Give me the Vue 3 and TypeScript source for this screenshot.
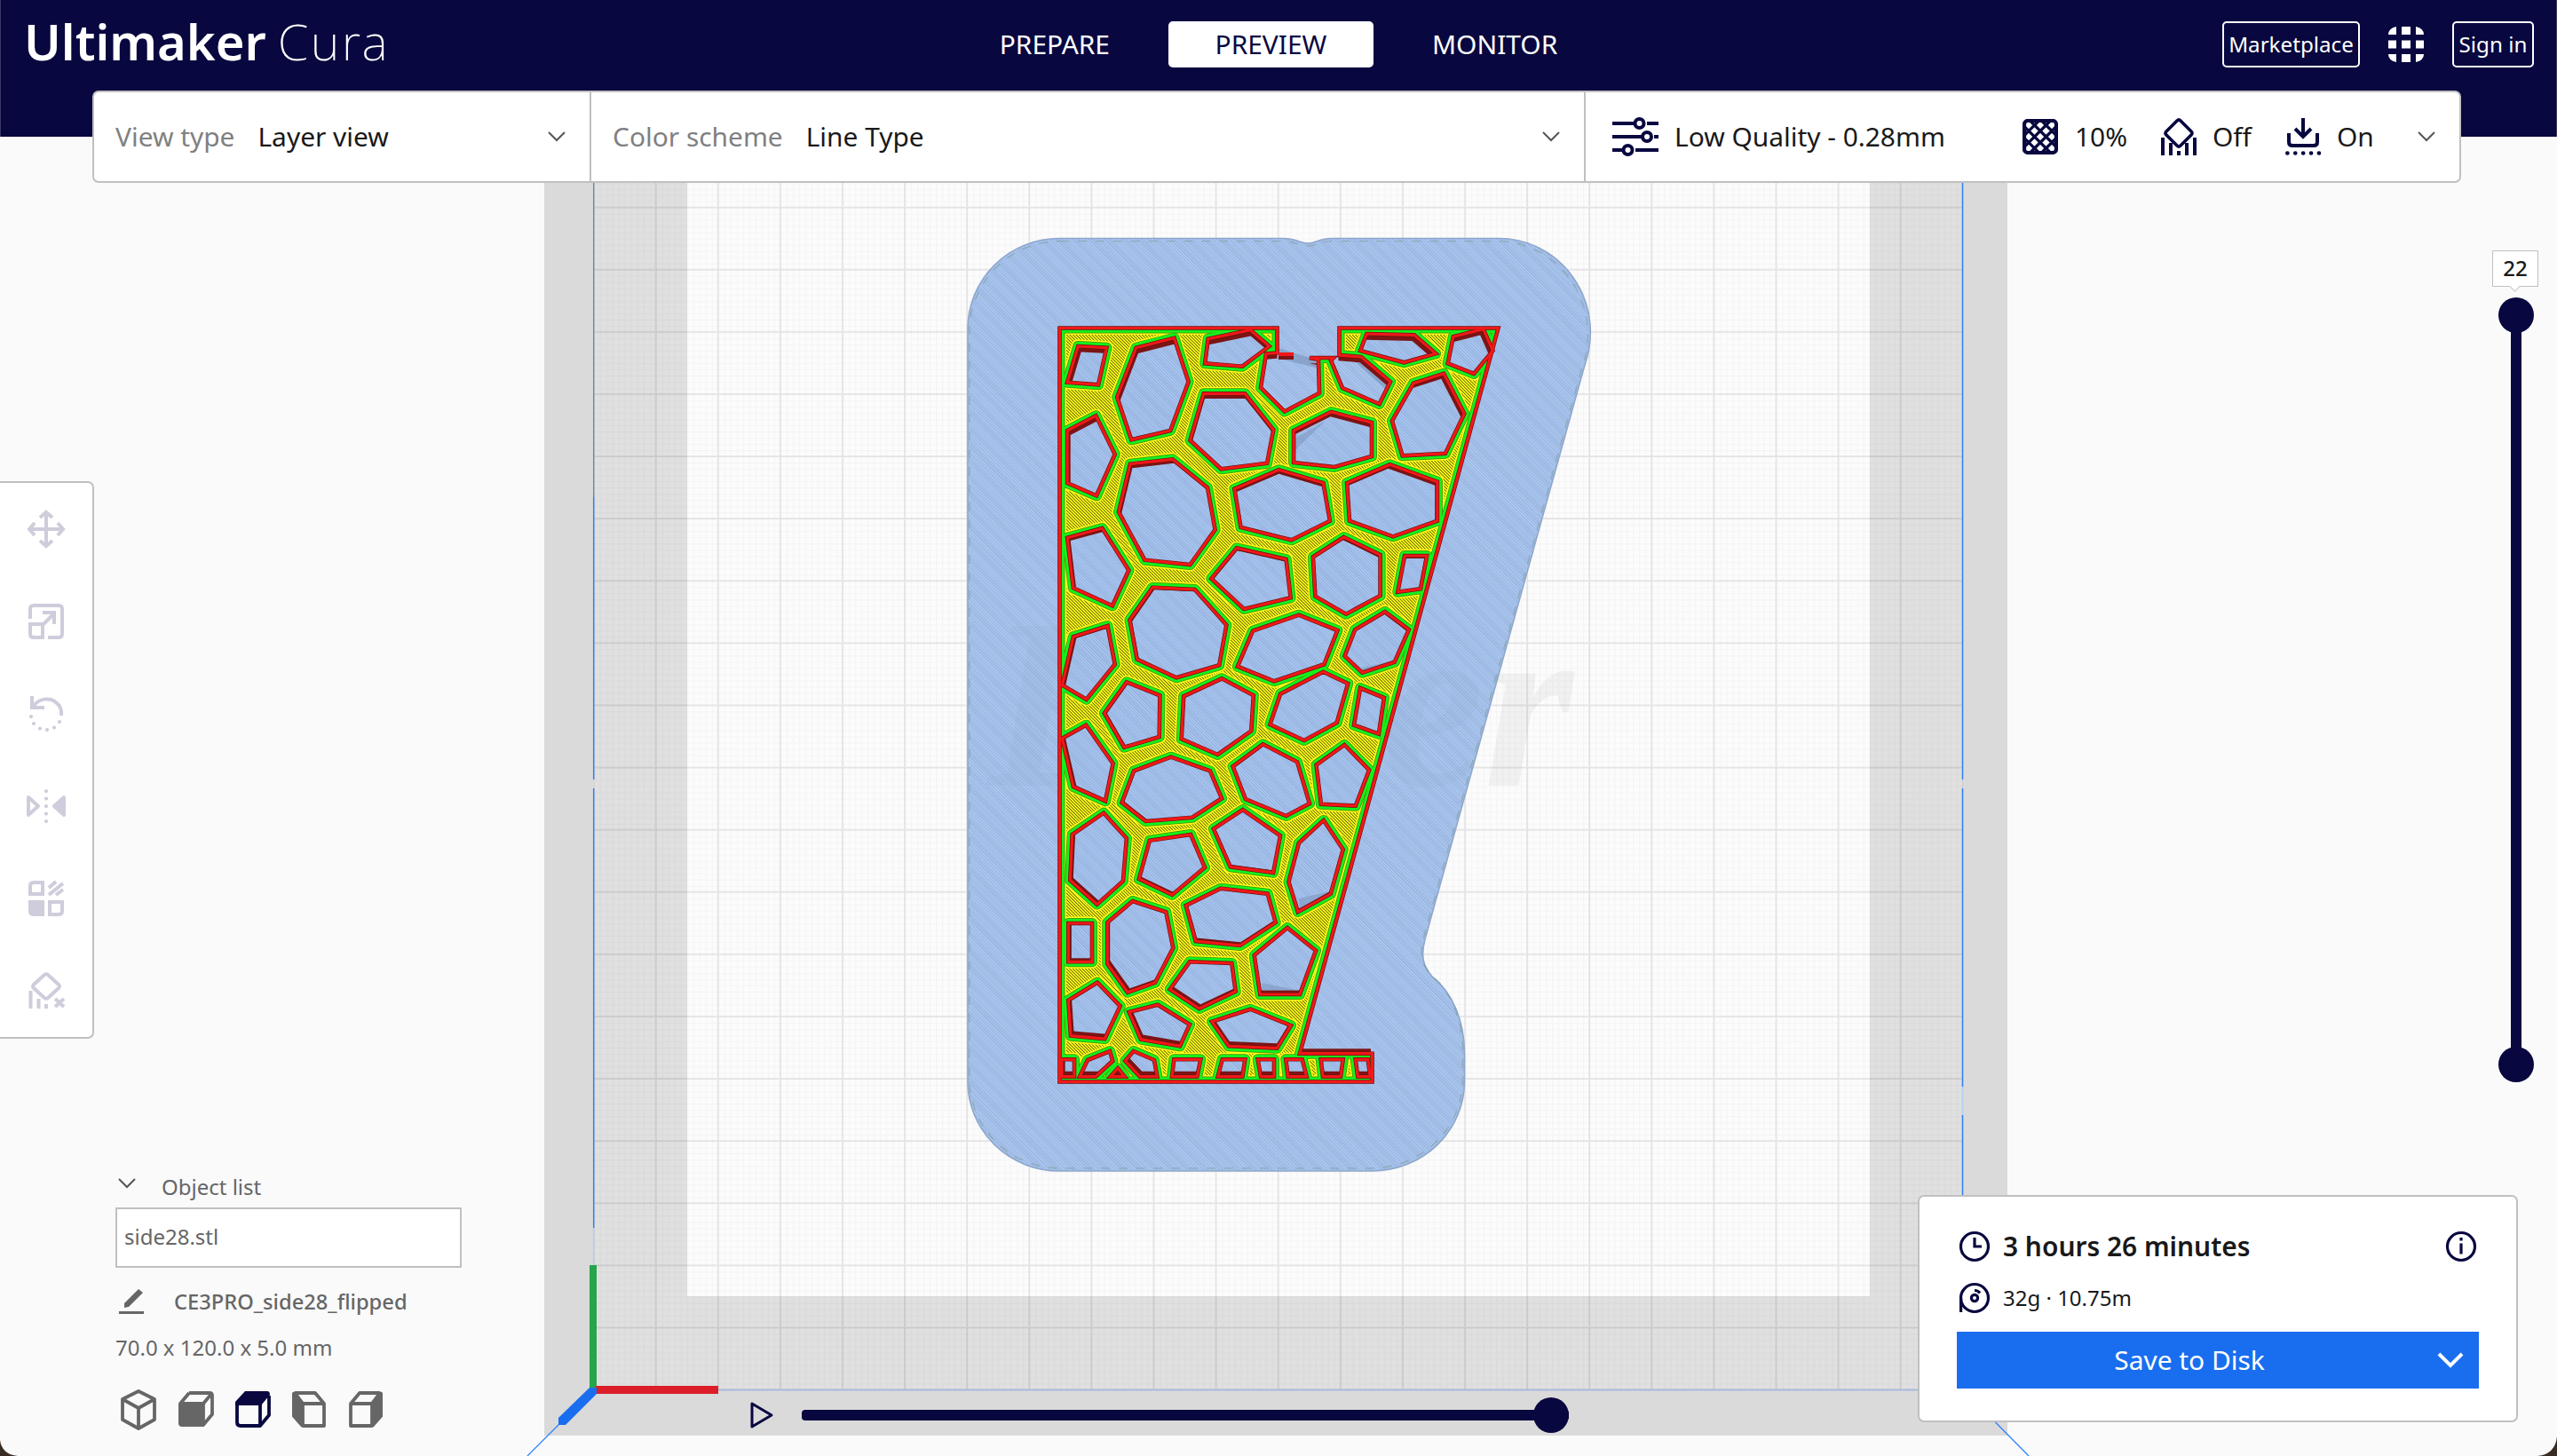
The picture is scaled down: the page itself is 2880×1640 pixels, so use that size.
<script setup lang="ts">
type Pt = [number, number]

interface Patch {
  ox: number
  oy: number
  sx: number
  sy: number
  shapes: string[]
}

// Hole outlines, grouped by the tile of the plate they were traced on.
const patches: Patch[] = [
  {
    ox: 1160, oy: 340, sx: 2.8, sy: 3,
    shapes: [
      '152,150 242,155 216,280 118,272',
      '335,155 455,122 500,270 443,435 320,466 275,322',
      '562,125 695,95 755,150 670,218 552,208',
      '1062,108 1212,112 1280,175 1180,205 1042,165',
      '1335,118 1430,92 1460,165 1400,243 1318,208',
      '548,310 678,310 768,432 748,545 603,565 505,468',
      '832,435 950,372 1078,408 1078,522 960,558 832,543',
      '1210,275 1305,242 1370,378 1310,512 1175,520 1142,402',
      '118,435 208,385 268,515 210,655 118,612',
      '316,548 450,532 560,628 584,770 505,888 362,872 280,710',
      '645,632 785,568 925,612 946,740 825,805 665,762',
      '1000,612 1135,550 1285,608 1285,740 1145,793 1008,740',
      '118,797 228,765 312,907 260,1027 137,967',
      '652,832 808,870 822,1000 675,1038 572,935',
      '990,795 1105,855 1105,993 997,1055 900,995 893,862',
      '1182,858 1252,858 1232,970 1160,980',
    ],
  },
  {
    ox: 1160, oy: 640, sx: 2.8, sy: 3,
    shapes: [
      '387,65 520,72 620,192 597,328 462,370 338,308 315,175',
      '848,158 970,210 928,325 770,382 655,332 703,212',
      '1120,147 1195,208 1150,317 1048,353 993,297 1025,208',
      '137,232 245,195 268,325 178,443 102,395',
      '305,385 410,430 408,570 297,605 235,490',
      '605,373 705,430 698,550 592,630 478,577 485,433',
      '925,350 1003,390 968,522 865,582 757,528 790,425',
      '1042,405 1117,438 1100,560 1022,530',
      '177,530 262,660 238,787 137,738 102,575',
      '445,638 568,685 605,778 512,842 365,855 290,792 328,685',
      '735,595 843,655 882,795 808,837 680,780 640,670',
      '992,597 1070,682 1027,803 918,797 903,665',
    ],
  },
  {
    ox: 1060, oy: 780, sx: 2.01026, sy: 2.8,
    shapes: [
      '368,380 420,460 412,595 353,668 292,592 297,448',
      '472,467 565,448 597,552 523,638 448,588',
      '683,370 768,452 752,568 655,550 617,430',
      '866,403 910,495 882,635 808,692 787,597 810,475',
    ],
  },
  {
    ox: 1160, oy: 940, sx: 3, sy: 3,
    shapes: [
      '645,182 803,200 830,297 710,375 560,360 527,240',
      '870,315 966,392 912,540 778,540 758,408',
      '130,300 210,300 210,430 130,430',
      '347,225 460,262 484,383 423,500 330,533 262,437 262,297',
      '540,430 682,435 695,530 572,588 473,523',
      '228,500 305,580 253,690 138,680 130,560',
      '432,575 540,642 507,715 375,692 335,600',
      '745,590 882,645 835,722 672,715 615,632',
      '108,760 150,760 150,818 108,818',
      '195,762 270,732 280,765 222,818 168,818',
      '350,732 420,762 430,818 372,818 322,765',
      '297,790 320,818 272,818',
      '487,760 577,760 565,818 480,818',
      '650,760 727,760 718,818 635,818',
      '770,760 825,760 825,818 780,818',
      '865,760 920,760 935,818 872,818',
      '983,760 1058,760 1050,818 990,818',
      '1100,760 1142,760 1150,818 1108,818',
    ],
  },
]

const holes: string[] = patches.flatMap((p) =>
  p.shapes.map((s) =>
    s.split(' ')
      .map((pair) => pair.split(',').map(Number) as Pt)
      .map(([u, v]) => `${(p.ox + u / p.sx).toFixed(1)},${(p.oy + v / p.sy).toFixed(1)}`)
      .join(' '),
  ),
)

const outline =
  'M1193.5 369.5H1438.5V397.5L1426 398.5L1420 436.7L1446.8 463.5L1486 442.7L1485 405L1475 403H1502L1499 406L1512 437L1553.5 455L1566 430L1533 402L1508.5 400V369.5H1687.5L1464 1186.7H1545.5V1218.5H1193.5Z'

const raft =
  'M1193 268.5H1445C1460 268.5 1464 274 1473 274S1486 268.5 1500 268.5H1685A103 106 0 0 1 1785 411L1605 1058C1600 1078 1603 1088 1613 1100C1636 1118 1649.5 1150 1649.5 1187V1219A104 101 0 0 1 1546 1319H1193A103 101 0 0 1 1090 1218V370A103 102 0 0 1 1193 268.5Z'

// The lowest layer is farther from the camera, so it shrinks towards the view centre.
const depth = 'translate(1440 820) scale(0.985) translate(-1440 -820)'

const cubes = [
  { name: '3d', color: '#666', lines: 'M22 3 40 12V35L22 45 4 35V12ZM4 12 22 22 40 12M22 22V45', fill: '' },
  { name: 'front', color: '#666', lines: 'M15 5H38Q41 5 41 8V29L31 41M15 5 5 17H31L41 5M31 17V42', fill: 'M3 17H32V43H7Q3 43 3 39Z' },
  { name: 'top', color: '#08073f', lines: 'M5 17V38Q5 42 9 42H31L41 30V8M31 17V42', fill: 'M14 3H39Q42 3 42 7L32 19H3V15Z' },
  { name: 'left', color: '#666', lines: 'M6 5H29L39 17V42H15V17H39M6 5 15 17M15 42 5 31V7', fill: 'M3 5Q5 2 8 5L16 17V43H13L3 31Z' },
  { name: 'right', color: '#666', lines: 'M38 5H15L5 17V42H29V17H5M38 5 29 17M29 42 39 31V7', fill: 'M41 5Q39 2 36 5L28 17V43H31L41 31Z' },
]
</script>

<template>
  <div class="app">
    <svg class="viewport" viewBox="0 0 2880 1640" width="2880" height="1640">
      <defs>
        <pattern id="minor" x="668.5" y="1565.5" width="7.01" height="7.01" patternUnits="userSpaceOnUse">
          <path d="M0 .5H7.01M.5 0V7.01" stroke="#000" stroke-opacity=".028" stroke-width="1.3" fill="none" />
        </pattern>
        <pattern id="major" x="667.5" y="1564.5" width="70.1" height="70.1" patternUnits="userSpaceOnUse">
          <path d="M0 1H70.1M1 0V70.1" stroke="#000" stroke-opacity=".075" stroke-width="2" fill="none" />
        </pattern>
        <pattern id="brim" width="13" height="13" patternUnits="userSpaceOnUse" patternTransform="rotate(-45)">
          <rect width="13" height="13" fill="#accbf7" />
          <path d="M.6 0V13M3.200 0V13M5.800 0V13M8.400 0V13M11 0V13" stroke="#8ea9d2" stroke-width="1" />
          <rect width="5" height="13" fill="#7f9ac6" fill-opacity=".13" />
        </pattern>
        <pattern id="skin" width="2.5" height="8" patternUnits="userSpaceOnUse" patternTransform="rotate(-45)">
          <rect width="2.5" height="8" fill="#ffff1a" />
          <rect width=".75" height="8" fill="#454400" />
        </pattern>
        <clipPath id="body"><path :d="outline" /></clipPath>
        <clipPath id="raftclip"><path :d="raft" /></clipPath>
        <clipPath v-for="(h, i) in holes" :id="'h' + i" :key="i"><polygon :points="h" /></clipPath>
      </defs>

      <rect width="2880" height="1640" fill="#fafafa" />
      <rect x="613" y="150" width="1648" height="1467" fill="#dadada" />
      <rect x="669" y="150" width="1542" height="1416" fill="#e0e0e0" />
      <rect x="774" y="150" width="1332" height="1310" fill="#fcfcfc" />
      <rect x="669" y="150" width="1542" height="1416" fill="url(#minor)" />
      <rect x="669" y="150" width="1542" height="1416" fill="url(#major)" />

      <path d="M668.7 206V560" stroke="#5b83bd" stroke-width="1.3" />
      <path d="M668.7 560V878M668.7 888V1383M2210.5 206V878M2210.5 888V1224M2210.5 1256V1400" stroke="#2f80fa" stroke-width="1.5" />
      <path d="M668.7 1383V1425M2210.5 1224V1256" stroke="#b4cdf5" stroke-width="1.5" />
      <path d="M809 1565.5H2211" stroke="#a9b9dd" stroke-width="2" />
      <path d="M668 1566 594 1640M2211 1565 2285 1640" stroke="#2f80fa" stroke-width="1.3" />

      <text class="brand-mark" x="1112" y="885" textLength="660" lengthAdjust="spacingAndGlyphs">Ender</text>
      <path :d="raft" fill="url(#brim)" fill-opacity=".96" stroke="#8fa6cd" stroke-width="1.6" />
      <g clip-path="url(#raftclip)">
        <text class="brand-mark faint" x="1112" y="885" textLength="660" lengthAdjust="spacingAndGlyphs">Ender</text>
      </g>
      <path :d="raft" fill="none" stroke="#7f9d9a" stroke-opacity=".6" stroke-width="1.4" stroke-dasharray="10 10" transform="translate(1370 794) scale(.993 .994) translate(-1370 -794)" />

      <path d="M1440 392 1478 404 1490 416 1440 404Z" fill="#7f98bf" fill-opacity=".7" />
      <path d="M1520 402 1534 404 1566 434 1560 438Z" fill="#7f98bf" fill-opacity=".7" />
      <path :d="outline" :transform="depth" fill="#7c1415" />
      <path :d="outline" fill="url(#skin)" />
      <g clip-path="url(#body)">
        <path :d="outline" class="edge-skin" />
        <polygon v-for="(h, i) in holes" :key="'y' + i" :points="h" class="edge-skin" />
        <path :d="outline" class="edge-gap" />
        <polygon v-for="(h, i) in holes" :key="'d' + i" :points="h" class="edge-gap" />
        <path :d="outline" class="edge-inner" />
        <polygon v-for="(h, i) in holes" :key="'g' + i" :points="h" class="edge-inner" />
      </g>
      <g v-for="(h, i) in holes" :key="'w' + i">
        <polygon :points="h" fill="#7c1415" />
        <g :clip-path="'url(#h' + i + ')'">
          <g :transform="depth"><polygon :points="h" fill="url(#brim)" /></g>
        </g>
      </g>
      <path d="M1458 494 1493 474 1470 496 1458 508Z" fill="#7f98bf" fill-opacity=".6" />
      <path d="M1534 752 1568 745 1535 756Z" fill="#7f98bf" fill-opacity=".6" />
      <path d="M1463 1012 1498 1004 1464 1024Z" fill="#7f98bf" fill-opacity=".6" />
      <path d="M1421 1107 1460 1115H1421Z" fill="#7f98bf" fill-opacity=".6" />
      <path :d="outline" class="edge-shade" />
      <polygon v-for="(h, i) in holes" :key="'s' + i" :points="h" class="edge-shade" />
      <path :d="outline" class="edge-outer" />
      <polygon v-for="(h, i) in holes" :key="'r' + i" :points="h" class="edge-outer" />
      <rect x="1440" y="397" width="17" height="4" fill="#f21717" />
      <rect x="1440" y="401" width="17" height="4" fill="#7c1415" />

      <rect x="664" y="1425" width="8" height="140" fill="#25a54c" />
      <rect x="671" y="1561" width="138" height="9" fill="#db1e28" />
      <path d="M664 1563H672V1570L637 1605H629V1597Z" fill="#196ef0" />
      <path d="M0 1622Q2 1638 20 1640H0ZM2880 1618Q2878 1638 2858 1640H2880Z" fill="#3a2c22" />
    </svg>

    <header class="header">
      <div class="logo"><b>Ultimaker</b><span>Cura</span></div>
      <nav class="stages">
        <a>PREPARE</a>
        <a class="active">PREVIEW</a>
        <a>MONITOR</a>
      </nav>
      <div class="account">
        <span class="btn market">Marketplace</span>
        <svg class="apps" width="40" height="40" viewBox="0 0 40 40" fill="#fff">
          <path d="M9 0V9H0Q0 2 9 0ZM15 0H25V9H15ZM31 0Q40 2 40 9H31ZM0 15.500H9V24.500H0ZM15 15.500H25V24.500H15ZM31 15.500H40V24.500H31ZM0 31H9V40Q0 38 0 31ZM15 31H25V40H15ZM31 31H40Q40 38 31 40Z" />
        </svg>
        <span class="btn sign">Sign in</span>
      </div>
    </header>

    <section class="bar">
      <div class="cell view">
        <span class="label">View type</span><span>Layer view</span>
        <svg class="chev" width="20" height="12" viewBox="0 0 20 12"><path d="M1 1 10 10 19 1" /></svg>
      </div>
      <div class="cell scheme">
        <span class="label">Color scheme</span><span>Line Type</span>
        <svg class="chev" width="20" height="12" viewBox="0 0 20 12"><path d="M1 1 10 10 19 1" /></svg>
      </div>
      <div class="cell settings">
        <svg width="52" height="44" viewBox="0 0 52 44" fill="none" stroke="#08073f" stroke-width="4">
          <path d="M0 7H25M39 7H52M0 22H33M47 22H52M0 37H12M26 37H52" />
          <circle cx="30.500" cy="7" r="5" /><circle cx="39" cy="22" r="5" /><circle cx="17.500" cy="37" r="5" />
        </svg>
        <span class="profile">Low Quality - 0.28mm</span>
        <svg width="40" height="40" viewBox="0 0 40 40">
          <rect x="2" y="2" width="36" height="36" rx="4" fill="none" stroke="#08073f" stroke-width="4.200" />
          <path d="M3 30.500 30.500 3M9.500 37 37 9.500M9.500 3 37 30.500M3 9.500 30.500 37M3 17.500 17.500 3M22.500 3 37 17.500M3 22.500 17.500 37M22.500 37 37 22.500" fill="none" stroke="#08073f" stroke-width="3.200" />
        </svg>
        <span class="infill">10%</span>
        <svg width="40" height="42" viewBox="0 0 40 42" fill="none" stroke="#08073f" stroke-width="4">
          <path d="M18 3Q20 1 22 3L34 15Q36 17 34 19L22 31Q20 33 18 31L6 19Q4 17 6 15Z" stroke-width="3.600" />
          <path d="M2 22V42M38 22V42M11 28V42M29 28V42M20 37V42" />
        </svg>
        <span class="support">Off</span>
        <svg width="40" height="42" viewBox="0 0 40 42" fill="none" stroke="#08073f" stroke-width="4">
          <path d="M20 0V20M11 12 20 21 29 12M4 17V27Q4 31 8 31H32Q36 31 36 27V17" />
          <path d="M2.300 39.500H40" stroke-linecap="round" stroke-dasharray=".1 8.800" stroke-width="4.600" />
        </svg>
        <span>On</span>
        <svg class="chev" width="20" height="12" viewBox="0 0 20 12"><path d="M1 1 10 10 19 1" /></svg>
      </div>
    </section>

    <aside class="tools">
      <svg viewBox="0 0 44 44" class="ln"><path d="M22 4V40M4 22H40M15 9 22 3 29 9M15 35 22 41 29 35M9 15 3 22 9 29M35 15 41 22 35 29" /></svg>
      <svg viewBox="0 0 44 44" class="ln"><path d="M4 19V8Q4 4 8 4H36Q40 4 40 8V36Q40 40 36 40H24M4 25H18V40H8Q4 40 4 36ZM18 26 31 13M18 12H31V25" /></svg>
      <svg viewBox="0 0 44 44" class="ln"><path d="M6 2V15H20M7 14C14 4 27 3 34 10Q40 15 39 24" /><path class="dots" d="M5 25 5 25.100M8 33 8 33.100M15 38.500V38.600M23 40V40.100M31 37.500V37.600M37 31V31.100" /></svg>
      <svg viewBox="0 0 44 44" class="ln"><path d="M2 12V32L13 22Z" stroke-linejoin="round" /><path d="M42 12V32L31 22Z" fill="#cfccdb" stroke-linejoin="round" /><path class="dots" d="M22 5V5.100M22 13.500V13.600M22 22V22.100M22 30.500V30.600M22 39V39.100" /></svg>
      <svg viewBox="0 0 44 44" class="ln">
        <path d="M4 17V8Q4 4 8 4H18V17ZM26 26H40V36Q40 40 36 40H26Z" /><path d="M4 26H18V40H8Q4 40 4 36Z" fill="#cfccdb" />
        <path d="M25 10 33 3M25 18 41 5M33 18 41 12" />
      </svg>
      <svg viewBox="0 0 44 44" class="ln"><path d="M20 4Q22 2.500 24 4L36 15Q38 17 36 19L24 30Q22 31.500 20 30L8 19Q6 17 8 15Z" /><path d="M4.500 22V42M13.500 31V42M22 37V42M32 31 42 40M42 31 32 40" /></svg>
    </aside>

    <section class="objects">
      <div class="obj-head">
        <svg class="chev" width="20" height="12" viewBox="0 0 20 12"><path d="M1 1 10 10 19 1" /></svg>
        <span>Object list</span>
      </div>
      <div class="obj-item">side28.stl</div>
      <div class="obj-name">
        <svg width="28" height="28" viewBox="0 0 28 28" fill="#666"><path d="M0 25H28V28H0ZM6 21V16L22 0 27 4 11 20Z" /></svg>
        <span>CE3PRO_side28_flipped</span>
      </div>
      <div class="obj-size">70.0 x 120.0 x 5.0 mm</div>
      <div class="cubes">
        <svg v-for="c in cubes" :key="c.name" width="44" height="48" viewBox="0 0 44 48">
          <path :d="c.lines" fill="none" :stroke="c.color" stroke-width="3.800" stroke-linejoin="round" />
          <path v-if="c.fill" :d="c.fill" :fill="c.color" />
        </svg>
      </div>
    </section>

    <div class="path-slider">
      <svg width="28" height="32" viewBox="0 0 28 32"><path d="M2 3V29L24 16Z" fill="none" stroke="#08073f" stroke-width="3" stroke-linejoin="round" /></svg>
      <div class="track"><i></i></div>
    </div>

    <div class="layer-slider">
      <div class="layer-value">22</div>
      <div class="vtrack"><i></i><i></i></div>
    </div>

    <section class="output">
      <div class="row time">
        <svg width="36" height="36" viewBox="0 0 36 36" fill="none" stroke="#08073f" stroke-width="3.200"><circle cx="18" cy="18" r="15.500" /><path d="M18 8V18H26" /></svg>
        <b>3 hours 26 minutes</b>
        <svg class="info" width="36" height="36" viewBox="0 0 36 36" fill="none" stroke="#08073f" stroke-width="3.200"><circle cx="18" cy="18" r="15.500" /><path d="M18 14.500V26.500M18 8V11.500" /></svg>
      </div>
      <div class="row usage">
        <svg width="36" height="36" viewBox="0 0 36 36" fill="none" stroke="#08073f" stroke-width="3.200"><circle cx="18" cy="18" r="15.500" /><circle cx="18" cy="18" r="3.600" /><path d="M2.600 18V34M18 9.500Q22 9.500 24 12.500" /></svg>
        <span>32g · 10.75m</span>
      </div>
      <div class="save">
        <span>Save to Disk</span>
        <svg width="30" height="18" viewBox="0 0 30 18"><path d="M2 2 15 15 28 2" fill="none" stroke="#fff" stroke-width="4" /></svg>
      </div>
    </section>
  </div>
</template>

<style>
body { margin: 0; }
</style>

<style scoped>
.app {
  position: relative;
  width: 2880px;
  height: 1640px;
  overflow: hidden;
  background: #fafafa;
  color: #191919;
  font-family: "Noto Sans", "Open Sans", sans-serif;
  font-size: 29.900px;
  line-height: 40px;
  white-space: nowrap;
}
svg { display: block; flex: none; }
.viewport { position: absolute; left: 0; top: 0; }
.brand-mark {
  font: italic bold 275px "Liberation Serif", serif;
  fill: #000;
  fill-opacity: .045;
}
.faint { fill-opacity: .016; }
.edge-skin, .edge-gap, .edge-inner, .edge-shade, .edge-outer { fill: none; stroke-linejoin: round; }
.edge-skin { stroke: #fbfb18; stroke-width: 15; }
.edge-gap { stroke: #4f8a08; stroke-width: 12; }
.edge-inner { stroke: #14f01c; stroke-width: 10.500; }
.edge-shade { stroke: #6d0f0f; stroke-width: 4.600; stroke-linejoin: miter; }
.edge-outer { stroke: #f01818; stroke-width: 3.200; stroke-linejoin: miter; }

.header {
  position: relative;
  box-sizing: border-box;
  height: 154px;
  padding: 24px 25px 0 26px;
  display: grid;
  grid-template-columns: 1fr auto 1fr;
  align-items: start;
  background: #08073f;
  border-left: 1px solid #3a3968;
  border-right: 1px solid #3a3968;
  color: #fff;
}
.logo { display: flex; gap: 13px; font-size: 56px; line-height: 52px; margin-top: -4px; }
.logo b { font-weight: 600; }
.logo span { font-weight: 200; letter-spacing: 2.400px; }
.stages { display: flex; gap: 66px; line-height: 52px; margin-left: -1px; }
.stages .active { box-sizing: border-box; width: 231px; text-align: center; background: #fff; color: #08073f; border-radius: 5px; }
.account { display: flex; align-items: center; justify-content: flex-end; font-size: 24.200px; }
.btn { box-sizing: border-box; height: 52px; line-height: 48px; border: 2px solid #fff; border-radius: 5px; text-align: center; }
.market { width: 155px; }
.apps { margin: 0 32px; }
.sign { width: 92px; }

.bar {
  position: absolute;
  left: 104px;
  top: 102px;
  box-sizing: border-box;
  width: 2668px;
  height: 104px;
  display: flex;
  background: #fff;
  border: 2px solid #c0c0c0;
  border-radius: 7px;
}
.cell { display: flex; align-items: center; box-sizing: border-box; flex: none; }
.cell + .cell { border-left: 2px solid #c0c0c0; }
.label { color: #808080; margin-right: 26px; }
.chev { margin-left: auto; fill: none; stroke: #555; stroke-width: 2; }
.view { width: 558px; padding: 0 27px 0 24px; }
.scheme { width: 1120px; padding: 0 27px 0 24px; }
.cell.settings { flex: 1; padding: 0 27px 0 30px; }
.profile { margin-left: 18px; width: 392px; }
.infill { margin-left: 19px; width: 97px; }
.support { margin-left: 18px; width: 82px; }
.settings span:nth-of-type(4) { margin-left: 18px; }

.tools {
  position: absolute;
  left: -2px;
  top: 542px;
  box-sizing: border-box;
  width: 108px;
  height: 628px;
  padding: 30px 0 0 30px;
  display: flex;
  flex-direction: column;
  gap: 60px;
  background: #fff;
  border: 2px solid #c0c0c0;
  border-radius: 0 7px 7px 0;
}
.tools svg { width: 44px; height: 44px; overflow: visible; }
.ln path { fill: none; stroke: #cfccdb; stroke-width: 4; }
.ln path[fill] { fill: #cfccdb; }
.ln .dots { stroke-linecap: round; stroke-width: 4.200; }

.objects { position: absolute; left: 130px; top: 1318px; width: 390px; font-size: 24px; color: #666; }
.obj-head { display: flex; align-items: center; gap: 29px; padding-left: 3px; height: 38px; }
.obj-head .chev { margin: -8px 0 0; }
.obj-item { box-sizing: border-box; margin-top: 4px; height: 68px; padding-left: 8px; line-height: 62px; background: #fff; border: 2px solid #c0c0c0; }
.obj-name { display: flex; align-items: center; gap: 34px; height: 40px; margin-top: 18px; padding-left: 4px; font-weight: 500; font-size: 23.700px; }
.obj-size { margin-top: 12px; }
.cubes { display: flex; gap: 20px; margin: 26px 0 0 4px; }

.path-slider { position: absolute; left: 845px; top: 1574px; height: 40px; display: flex; align-items: center; gap: 30px; }
.track { width: 864px; height: 12px; border-radius: 4px; background: #08073f; display: flex; align-items: center; justify-content: flex-end; }
i { display: block; flex: none; width: 40px; height: 40px; border-radius: 50%; background: #08073f; }

.layer-slider { position: absolute; left: 2807px; top: 282px; width: 54px; display: flex; flex-direction: column; align-items: center; gap: 12px; }
.layer-value { position: relative; box-sizing: border-box; width: 52px; height: 41px; margin-right: 2px; line-height: 38px; text-align: center; font-size: 24px; font-weight: 500; background: #fff; border: 1px solid #c0c0c0; }
.layer-value::after { content: ""; position: absolute; left: 20px; bottom: -5px; width: 8px; height: 8px; background: #fff; border: solid #c0c0c0; border-width: 0 1px 1px 0; transform: rotate(45deg); }
.vtrack { width: 12px; height: 884px; display: flex; flex-direction: column; align-items: center; justify-content: space-between; background: linear-gradient(#08073f, #08073f) center / 12px 860px no-repeat; }

.output {
  position: absolute;
  left: 2160px;
  top: 1346px;
  box-sizing: border-box;
  width: 676px;
  height: 256px;
  padding: 38px 42px 0;
  background: #fff;
  border: 2px solid #c0c0c0;
  border-radius: 7px;
}
.row { display: flex; align-items: center; gap: 14px; height: 36px; padding: 0 2px; }
.row b { font-weight: 600; }
.info { margin-left: auto; }
.usage { margin-top: 22px; font-size: 24px; }
.save { display: flex; align-items: center; height: 64px; margin-top: 20px; padding-right: 17px; background: #196ef0; color: #fff; }
.save span { flex: 1; text-align: center; padding-right: 17px; }
</style>
